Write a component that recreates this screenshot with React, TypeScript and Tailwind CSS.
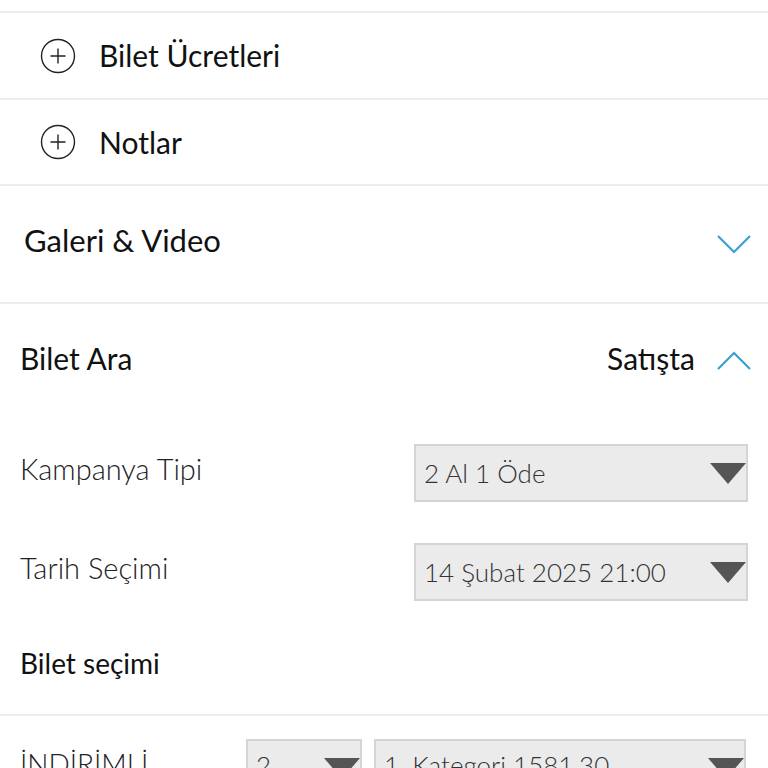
import { useState } from "react";

function PlusCircle() {
    return (
        <svg width="36" height="36" viewBox="0 0 36 36" className="shrink-0">
            <circle cx="18" cy="18" r="16.5" fill="none" stroke="#222" strokeWidth="1.4" />
            <path d="M18 10.5v15M10.5 18h15" stroke="#222" strokeWidth="1.4" />
        </svg>
    );
}

function Chevron({ up }: { up?: boolean }) {
    return (
        <svg width="34" height="20" viewBox="0 0 34 20" className="shrink-0">
            <path
                d={up ? "M1 19L17 3l16 16" : "M1 2l16 16L33 2"}
                fill="none"
                stroke="#3aa0d0"
                strokeWidth="2.2"
            />
        </svg>
    );
}

function Triangle() {
    return (
        <svg width="36" height="21" viewBox="0 0 36 21" className="shrink-0">
            <path d="M0 0h36L18 21z" fill="#555" />
        </svg>
    );
}

function Select({ value, className }: { value: string; className?: string }) {
    return (
        <div
            className={`flex h-[58px] items-center justify-between border-2 border-[#d4d4d4] bg-[#ebebeb] pl-[8px] pr-0 ${className ?? ""}`}
        >
            <span className="text-[26px] font-light text-[#333]">{value}</span>
            <Triangle />
        </div>
    );
}

export default function App() {
    const [campaign] = useState("2 Al 1 Öde");
    const [date] = useState("14 Şubat 2025 21:00");

    return (
        <main className="h-[768px] overflow-hidden bg-white font-['Lato','Noto_Sans',sans-serif] text-[#111]">
            <div className="h-[11px]" />
            <section className="border-t-2 border-[#ececec]">
                <div className="flex h-[85px] items-center gap-[23px] pl-[40px]">
                    <PlusCircle />
                    <span className="text-[30px]">Bilet Ücretleri</span>
                </div>
                <div className="flex h-[86px] items-center gap-[23px] border-t-2 border-[#ececec] pl-[40px]">
                    <PlusCircle />
                    <span className="text-[30px]">Notlar</span>
                </div>
            </section>

            <section className="flex h-[118px] items-center justify-between border-t-2 border-[#ececec] pl-[24px] pr-[17px]">
                <span className="pb-[8px] text-[31px]">Galeri &amp; Video</span>
                <Chevron />
            </section>

            <section className="border-t-2 border-[#ececec]">
                <div className="flex h-[112px] items-center justify-between pl-[20px] pr-[17px]">
                    <span className="pb-[4px] text-[30px]">Bilet Ara</span>
                    <div className="flex items-center gap-[22px]">
                        <span className="pb-[4px] text-[30px]">Satışta</span>
                        <Chevron up />
                    </div>
                </div>

                <div className="flex flex-col gap-[41px] pl-[20px] pr-[20px] pt-[28px]">
                    <div className="flex items-center">
                        <span className="w-[394px] pb-[8px] text-[29px] font-light text-[#222]">Kampanya Tipi</span>
                        <Select value={campaign} className="flex-1" />
                    </div>
                    <div className="flex items-center">
                        <span className="w-[394px] pb-[8px] text-[29px] font-light text-[#222]">Tarih Seçimi</span>
                        <Select value={date} className="flex-1" />
                    </div>
                </div>

                <div className="flex h-[113px] items-center pl-[20px] pt-[10px]">
                    <span className="text-[28px]">Bilet seçimi</span>
                </div>
            </section>

            <section className="border-t-2 border-[#ececec] pl-[20px] pr-[22px] pt-[23px]">
                <div className="flex items-start gap-[12px]">
                    <span className="w-[214px] pt-[10px] text-[28px] font-light leading-none text-[#222]">İNDİRİMLİ</span>
                    <Select value="2" className="w-[116px] [&>span]:-mt-[6px]" />
                    <Select value="1. Kategori 1581,30" className="flex-1 [&>span]:-mt-[6px]" />
                </div>
            </section>
        </main>
    );
}
